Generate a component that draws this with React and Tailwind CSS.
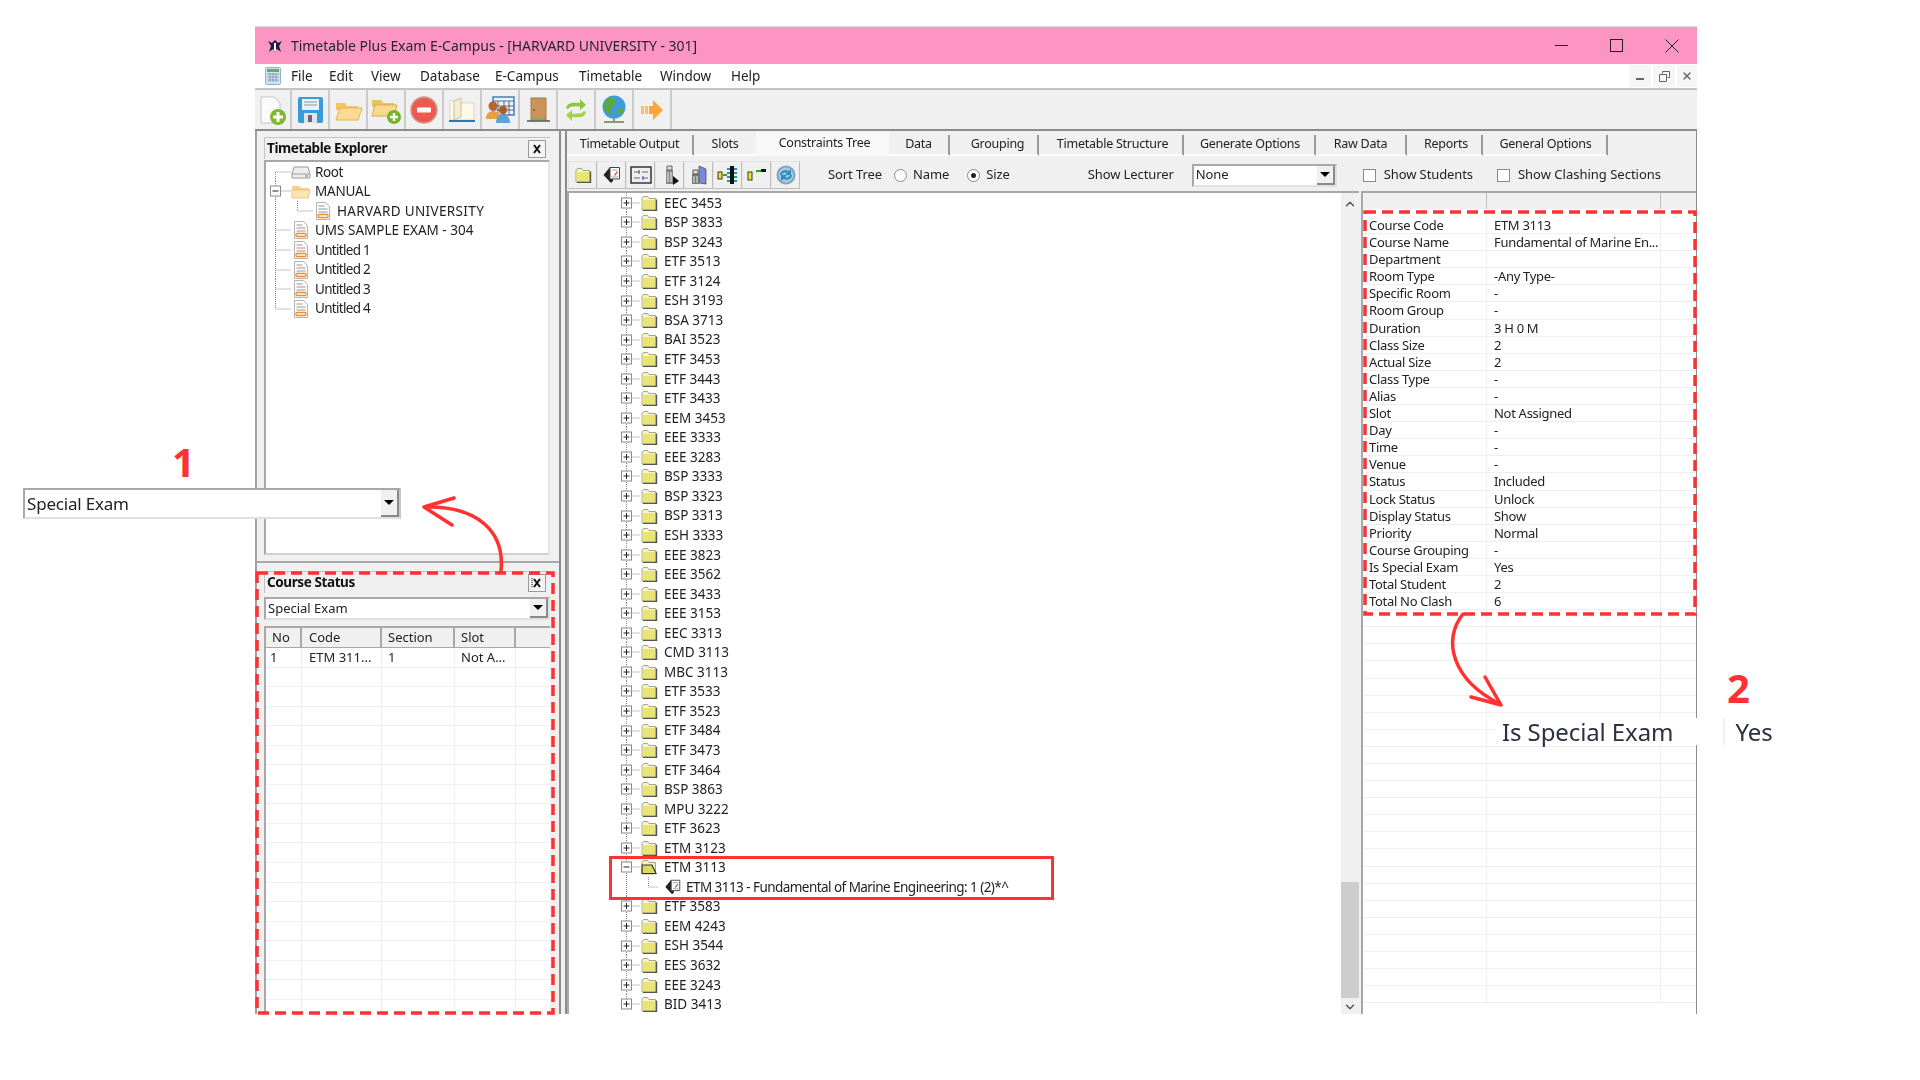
import React from "react";
import { X, ChevronUp, ChevronDown } from "lucide-react";

const menus = [
  ["File", "w-[38px]"],
  ["Edit", "w-[42px]"],
  ["View", "w-[49px]"],
  ["Database", "w-[75px]"],
  ["E-Campus", "w-[84px]"],
  ["Timetable", "w-[81px]"],
  ["Window", "w-[71px]"],
  ["Help", "w-[40px]"],
];

const tabs = [
  ["Timetable Output", "w-[127px]"],
  ["Slots", "w-[62px]"],
  ["Constraints Tree", "w-[133px] pl-[4px]"],
  ["Data", "w-[61px]"],
  ["Grouping", "w-[89px] pl-[8px]"],
  ["Timetable Structure", "w-[145px] pl-[4px]"],
  ["Generate Options", "w-[132px] pl-[2px]"],
  ["Raw Data", "w-[91px]"],
  ["Reports", "w-[76px] pl-[4px]"],
  ["General Options", "w-[125px] pl-[2px]"],
];

const coursesTop = [
  "EEC 3453", "BSP 3833", "BSP 3243", "ETF 3513", "ETF 3124", "ESH 3193", "BSA 3713",
  "BAI 3523", "ETF 3453", "ETF 3443", "ETF 3433", "EEM 3453", "EEE 3333", "EEE 3283",
  "BSP 3333", "BSP 3323", "BSP 3313", "ESH 3333", "EEE 3823", "EEE 3562", "EEE 3433",
  "EEE 3153", "EEC 3313", "CMD 3113", "MBC 3113", "ETF 3533", "ETF 3523", "ETF 3484",
  "ETF 3473", "ETF 3464", "BSP 3863", "MPU 3222", "ETF 3623", "ETM 3123",
];
const coursesBottom = ["ETF 3583", "EEM 4243", "ESH 3544", "EES 3632", "EEE 3243", "BID 3413"];

const props = [
  ["Course Code", "ETM 3113"],
  ["Course Name", "Fundamental of Marine En..."],
  ["Department", ""],
  ["Room Type", "-Any Type-"],
  ["Specific Room", "-"],
  ["Room Group", "-"],
  ["Duration", "3 H 0 M"],
  ["Class Size", "2"],
  ["Actual Size", "2"],
  ["Class Type", "-"],
  ["Alias", "-"],
  ["Slot", "Not Assigned"],
  ["Day", "-"],
  ["Time", "-"],
  ["Venue", "-"],
  ["Status", "Included"],
  ["Lock Status", "Unlock"],
  ["Display Status", "Show"],
  ["Priority", "Normal"],
  ["Course Grouping", "-"],
  ["Is Special Exam", "Yes"],
  ["Total Student", "2"],
  ["Total No Clash", "6"],
];

// tree gutter: dotted connector plus optional +/- box
function Gutter({ box, last, first, width = 22 }) {
  return (
    <svg width={width} height="20" viewBox={`0 0 ${width} 20`} className="shrink-0">
      <path
        d={`M8.5 ${first ? 10 : 0}V${last ? 10 : 20}M8.5 10H${width}`}
        stroke="#888"
        strokeDasharray="1 1"
        fill="none"
      />
      {box && (
        <>
          <rect x="3.5" y="5" width="10" height="10" fill="#fff" stroke="#8a8a8a" />
          <path d={box === "plus" ? "M5.5 10h6M8.5 7v6" : "M5.5 10h6"} stroke="#222" />
        </>
      )}
    </svg>
  );
}

function Folder({ open }) {
  return (
    <svg width="18" height="16" viewBox="0 0 18 16" className="shrink-0">
      <path d="M2 3.5 3.5 1.5h4L9 3.5h6.5V15H2z" fill="#f6f4d0" stroke="#8f8f70" strokeWidth=".8" />
      {open ? (
        <path d="M2 6h10l4 8.5H2z" fill="#dcd95e" stroke="#333" strokeWidth="1.2" />
      ) : (
        <>
          <rect x="2.5" y="5" width="13" height="9.5" fill="#e8e576" />
          <path d="M16.5 4.5V15.5H3" stroke="#555" strokeWidth="1.4" fill="none" />
        </>
      )}
    </svg>
  );
}

function TagDoc({ size = 20 }) {
  return (
    <svg width={size} height={size} viewBox="0 0 20 20" className="shrink-0">
      <path d="M8 2 1.5 10 9 18l2-2V6z" fill="#222" />
      <path d="M8 2.5h9.5V14H8z" fill="#fff" stroke="#444" />
      <path d="M10 5h5M10 12h6" stroke="#8aa" />
      <path d="m12 10 3-4 1 1-3 4z" fill="#d9553a" />
    </svg>
  );
}

function DocIcon() {
  return (
    <svg width="16" height="20" viewBox="0 0 16 20" className="shrink-0">
      <path d="M1.5 1.5h9l4 4v13h-13z" fill="#fdfbf6" stroke="#b4b4b4" />
      <path d="M3.5 5h6M3.5 8h9M3.5 11h9" stroke="#999" />
      <rect x="3" y="13.5" width="10" height="3" rx="1" fill="#fff" stroke="#ef8a30" strokeWidth="1.3" />
    </svg>
  );
}

function ExplorerRow({ depth, box, first, last, icon, label, labelClass = "" }) {
  return (
    <div className="flex items-center h-[19.55px] text-[13.5px] text-[#222] whitespace-nowrap">
      {depth === 1 ? (
        <svg width="46" height="20" viewBox="0 0 46 20" className="shrink-0">
          <path d="M8.5 0V20M30.5 0V10H46" stroke="#888" strokeDasharray="1 1" fill="none" />
        </svg>
      ) : (
        <Gutter box={box} first={first} last={last} width={24} />
      )}
      <span className="w-[20px] flex justify-center shrink-0">{icon}</span>
      <span className={`ml-[4px] ${labelClass}`}>{label}</span>
    </div>
  );
}

function ToolBtn({ children }) {
  return (
    <div className="w-[38px] h-full flex items-center justify-center border-r-2 border-[#c9c9c9] shrink-0">
      {children}
    </div>
  );
}

function SubBtn({ children }) {
  return (
    <div className="w-[29px] h-[28px] flex items-center justify-center border border-[#e4e4e4] border-r-[#bdbdbd] border-b-[#bdbdbd] shrink-0">
      {children}
    </div>
  );
}

function Combo({ text, className, textClass = "text-[13.5px]" }) {
  return (
    <div className={`flex items-center bg-white border-2 border-[#a8a8a8] border-r-[#e0e0e0] border-b-[#e0e0e0] ${className}`}>
      <span className={`flex-1 pl-[2px] text-[#222] ${textClass}`}>{text}</span>
      <span className="w-[18px] h-full flex items-center justify-center bg-[#f0f0f0] border-r-2 border-b-2 border-[#8a8a8a]">
        <span className="w-0 h-0 border-x-[5px] border-x-transparent border-t-[5px] border-t-black" />
      </span>
    </div>
  );
}

function PanelHeader({ title, pinned }) {
  return (
    <div className="h-[22px] flex items-center justify-between border-t border-l border-[#c4c4c4] pl-[2px] pr-[4px]">
      <span className="font-bold text-[13.5px] tracking-[-0.4px] text-[#111]">{title}</span>
      <span className="w-[18px] h-[18px] flex items-center justify-center border border-[#9a9a9a] bg-[#f4f4f4]">
        <svg width="12" height="12" viewBox="0 0 12 12" fill="none" stroke="#111">
          <path d="M3 2 9 10M9 2 3 10" strokeWidth="2" />
          {pinned && <path d="M1 1v10" strokeDasharray="1 1" />}
        </svg>
      </span>
    </div>
  );
}

function Annotations() {
  return (
    <svg className="absolute inset-0 pointer-events-none" width="1920" height="1080" viewBox="0 0 1920 1080" fill="none">
      <rect x="257" y="573" width="296" height="440" stroke="#ff3131" strokeWidth="3.5" strokeDasharray="11 6" />
      <rect x="1365" y="212" width="330" height="402" stroke="#ff3131" strokeWidth="3.5" strokeDasharray="11 6" />
      <path d="M501 571C505 532 478 506 426 507" stroke="#ff3131" strokeWidth="3.5" strokeLinecap="round" />
      <path d="M454 498 424 507 452 525" stroke="#ff3131" strokeWidth="3.5" strokeLinecap="round" strokeLinejoin="round" />
      <path d="M1463 614C1442 640 1452 680 1500 704" stroke="#ff3131" strokeWidth="3.5" strokeLinecap="round" />
      <path d="M1471 697 1501 705 1485 677" stroke="#ff3131" strokeWidth="3.5" strokeLinecap="round" strokeLinejoin="round" />
    </svg>
  );
}

export default function App() {
  return (
    <div className="relative w-[1920px] h-[1080px] bg-white overflow-hidden pt-[26px] pl-[255px] font-['Noto_Sans',sans-serif]">
      <div className="w-[1442px] h-[988px] flex flex-col border-t border-[#dcdcdc] overflow-hidden blur-[0.35px]">
        {/* title bar */}
        <div className="h-[37px] shrink-0 bg-[#fc95c1] flex items-center pl-[12px] text-[14px] tracking-[-0.05px] text-[#2a2230]">
          <svg width="16" height="16" viewBox="0 0 16 16" className="mr-[8px]">
            <path d="M1 3l4 2 3-3 3 3 4-2-3 5 2 6-4-3-2 3-2-3-4 3 2-6z" fill="#1e1a4a" />
            <path d="M7 5h2v8H7z" fill="#fff" />
          </svg>
          <span>Timetable Plus Exam E-Campus - [HARVARD UNIVERSITY - 301]</span>
          <div className="ml-auto flex items-center h-full -mr-[2px]">
            <span className="w-[55px] flex justify-center">
              <svg width="13" height="13" viewBox="0 0 13 13" stroke="#222" fill="none"><path d="M0 6.5h13" /></svg>
            </span>
            <span className="w-[55px] flex justify-center">
              <svg width="13" height="13" viewBox="0 0 13 13" stroke="#222" fill="none"><rect x=".5" y=".5" width="12" height="12" /></svg>
            </span>
            <span className="w-[55px] flex justify-center">
              <svg width="14" height="14" viewBox="0 0 14 14" stroke="#222" fill="none"><path d="M.5.5l13 13M13.5.5l-13 13" /></svg>
            </span>
          </div>
        </div>

        {/* menu bar */}
        <div className="h-[26px] shrink-0 bg-white border-b-2 border-[#c4c4c4] flex items-center pl-[10px] text-[13.5px] text-[#222]">
          <svg width="16" height="18" viewBox="0 0 16 18" className="mr-[10px]">
            <rect x=".5" y=".5" width="15" height="17" rx="1" fill="#cfe3f2" stroke="#8fb2cc" />
            <rect x="2" y="2" width="12" height="3" fill="#68a868" />
            <path d="M2 7h12M2 10h12M2 13h12M5 6v9M8 6v9M11 6v9" stroke="#7d95a8" strokeWidth=".8" />
          </svg>
          {menus.map(([m, w]) => (
            <span key={m} className={w}>{m}</span>
          ))}
          <div className="ml-auto flex items-center gap-[2px] text-[#666]">
            <span className="w-[22px] h-[22px] flex items-center justify-center bg-[#f6f6f6]"><span className="w-[8px] h-[2px] mt-[6px] bg-[#666]" /></span>
            <span className="w-[22px] h-[22px] flex items-center justify-center bg-[#f6f6f6]">
              <svg width="11" height="11" viewBox="0 0 11 11" fill="none" stroke="#666"><path d="M3.5 2.5V.5h7v6h-2M.5 3.5h7v7h-7z" /></svg>
            </span>
            <span className="w-[20px] h-[22px] flex items-center justify-center bg-[#f6f6f6]"><X size={12} strokeWidth={3} /></span>
          </div>
        </div>

        {/* main toolbar */}
        <div className="h-[39px] shrink-0 bg-[#f0f0f0] flex items-stretch -ml-[1px]">
          <ToolBtn>
            <svg width="32" height="32" viewBox="0 0 32 32"><path d="M5 3h13l6 6v20H5z" fill="#fafafa" stroke="#c4c4c4" /><circle cx="22" cy="23" r="8" fill="#7fb82a" /><path d="M22 18v10M17 23h10" stroke="#fff" strokeWidth="3" /></svg>
          </ToolBtn>
          <ToolBtn>
            <svg width="30" height="30" viewBox="0 0 30 30"><rect x="3" y="2" width="25" height="26" rx="2" fill="#3b9bd8" /><rect x="7" y="4" width="17" height="11" fill="#eef2f4" /><path d="M9 7h13M9 10h13" stroke="#8898a4" /><rect x="9" y="18" width="13" height="10" fill="#dce4ea" /><rect x="13" y="20" width="4" height="7" fill="#667" /></svg>
          </ToolBtn>
          <ToolBtn>
            <svg width="30" height="30" viewBox="0 0 30 30"><path d="M3 8h9l2 3h11v4H3z" fill="#f6c35d" /><path d="M3 25 7 13h22l-4 12z" fill="#fcdc95" stroke="#e8b34c" /></svg>
          </ToolBtn>
          <ToolBtn>
            <svg width="32" height="32" viewBox="0 0 32 32"><path d="M2 6h9l2 3h11v4H2z" fill="#e9c265" /><path d="M2 22 5 11h22l-3 11z" fill="#f8da8c" stroke="#d9ab47" /><circle cx="24" cy="23" r="7" fill="#74b32a" /><path d="M24 19v8M20 23h8" stroke="#fff" strokeWidth="2.4" /></svg>
          </ToolBtn>
          <ToolBtn>
            <svg width="30" height="30" viewBox="0 0 30 30"><circle cx="15" cy="15" r="13" fill="#ef5a50" stroke="#c9a090" strokeWidth="1.5" /><rect x="8" y="12.5" width="14" height="5" rx="1" fill="#fff" /></svg>
          </ToolBtn>
          <ToolBtn>
            <svg width="32" height="30" viewBox="0 0 32 30"><path d="M4 5v20h24V8H16z" fill="#fdf8ea" stroke="#ddd4b8" /><path d="M15 3 8 6v19l7-3z" fill="#f4edd2" stroke="#c8c0a4" /><path d="M3 26h26" stroke="#2f76b5" strokeWidth="2" /></svg>
          </ToolBtn>
          <ToolBtn>
            <svg width="32" height="30" viewBox="0 0 32 30"><rect x="9" y="2" width="21" height="18" fill="#eef3f8" stroke="#3f7fc4" strokeWidth="1.5" /><path d="M9 6h21M14 6v14M20 6v14M25 6v14M9 11h21M9 15h21" stroke="#445" strokeWidth=".8" /><circle cx="9" cy="11" r="4.5" fill="#b4662c" /><path d="M2 24c0-6 4-8 7-8s7 2 7 8z" fill="#e8a13a" /><circle cx="19" cy="15" r="4" fill="#a65e2c" /><path d="M12 28c0-6 3-8 7-8s7 2 7 8z" fill="#5ea0dc" /></svg>
          </ToolBtn>
          <ToolBtn>
            <svg width="30" height="30" viewBox="0 0 30 30"><rect x="8" y="3" width="15" height="22" fill="#c9935a" stroke="#a87a48" /><circle cx="11" cy="15" r="1" fill="#654" /><rect x="9" y="23" width="13" height="2" fill="#8aa858" /><path d="M4 26h23" stroke="#555" strokeWidth="1.5" /></svg>
          </ToolBtn>
          <ToolBtn>
            <svg width="26" height="26" viewBox="0 0 26 26" fill="none"><path d="M3 11C4 6 9 5 17 6V2l6 6-6 5V9.5C11 9 7 9 5 12z" fill="#8cc63f" /><path d="M23 15c-1 5-6 6-14 5v4l-6-6 6-5v3.5c6 .5 10 .5 12-2.500z" fill="#a6d14a" /></svg>
          </ToolBtn>
          <ToolBtn>
            <svg width="30" height="32" viewBox="0 0 30 32"><circle cx="15" cy="13" r="11.5" fill="#3f9ae0" /><path d="M11 3c4 1 7 3 6 6s-4 2-5 5 2 5 1 7c-4-1-8-5-8-9s3-8 6-9zM19 14c3 0 5 1 5 2s-2 5-4 5-2-5-1-7z" fill="#5ba83c" /><path d="M15 24v3M5 28h20" stroke="#8a9a70" strokeWidth="2" /></svg>
          </ToolBtn>
          <ToolBtn>
            <svg width="26" height="26" viewBox="0 0 26 26"><path d="M2 9h3v8H2zM6 9h3v8H6z" fill="#fbc45a" /><path d="M10 9h4V3l10 10-10 10v-6h-4z" fill="#f9a63a" /></svg>
          </ToolBtn>
        </div>

        {/* main area */}
        <div className="flex-1 min-h-0 flex bg-[#f0f0f0] border-t-2 border-[#8c8c8c]">
          {/* left column */}
          <div className="w-[306px] shrink-0 flex flex-col border-l-2 border-[#a0a0a0] border-r-2 border-r-[#8c8c8c]">
            <div className="h-[432px] shrink-0 pt-[6px] pl-[7px] pr-[9px] pb-[6px] flex flex-col border-b-2 border-[#a8a8a8]">
              <PanelHeader title="Timetable Explorer" />
              <div className="flex-1 mt-[1px] bg-white border-2 border-[#a8a8a8] border-r-[#e4e4e4] border-b-[#d0d0d0] pl-[1px]">
                <ExplorerRow first labelClass="tracking-[-0.4px]" icon={
                  <svg width="20" height="16" viewBox="0 0 20 16"><path d="M3 3h14l2 7v4H1v-4z" fill="#eceff2" stroke="#9a9a9a" /><path d="M1 10h18" stroke="#9a9a9a" /><rect x="14" y="11.5" width="3" height="1" fill="#777" /></svg>
                } label="Root" />
                <ExplorerRow box="minus" labelClass="tracking-[-0.2px]" icon={
                  <svg width="20" height="17" viewBox="0 0 20 17"><path d="M1 3h7l2 2h8v10H1z" fill="#f7cf8b" /><path d="M1 7h18l-2 8H1z" fill="#fde4b4" stroke="#e4bd7c" strokeWidth=".8" /></svg>
                } label="MANUAL" />
                <ExplorerRow depth={1} labelClass="tracking-[0.35px]" icon={<DocIcon />} label="HARVARD UNIVERSITY" />
                <ExplorerRow icon={<DocIcon />} label="UMS SAMPLE EXAM - 304" />
                <ExplorerRow labelClass="tracking-[-0.7px]" icon={<DocIcon />} label="Untitled 1" />
                <ExplorerRow labelClass="tracking-[-0.7px]" icon={<DocIcon />} label="Untitled 2" />
                <ExplorerRow labelClass="tracking-[-0.7px]" icon={<DocIcon />} label="Untitled 3" />
                <ExplorerRow last labelClass="tracking-[-0.7px]" icon={<DocIcon />} label="Untitled 4" />
              </div>
            </div>

            <div className="flex-1 min-h-0 pl-[7px] pr-[9px] pt-[8px] flex flex-col">
              <PanelHeader title="Course Status" pinned />
              <Combo text="Special Exam" className="h-[23px] mt-[4px]" textClass="text-[13px]" />
              <div className="flex-1 min-h-0 mt-[6px] bg-white border-t-2 border-l-2 border-[#a8a8a8] text-[13px] text-[#222] overflow-hidden">
                <div className="flex h-[20px] bg-[#f0f0f0] border-b border-[#a8a8a8]">
                  <span className="w-[36px] pl-[6px] border-r-2 border-[#a8a8a8]">No</span>
                  <span className="w-[80px] pl-[7px] border-r-2 border-[#a8a8a8]">Code</span>
                  <span className="w-[73px] pl-[6px] border-r-2 border-[#a8a8a8]">Section</span>
                  <span className="w-[61px] pl-[6px] border-r-2 border-[#a8a8a8]">Slot</span>
                </div>
                {Array.from({ length: 20 }).map((_, i) => (
                  <div key={i} className="flex h-[19.55px] leading-[19px] border-b border-[#efefef]">
                    <span className="w-[36px] pl-[4px] border-r border-[#efefef]">{i === 0 && "1"}</span>
                    <span className="w-[80px] pl-[7px] border-r border-[#efefef]">{i === 0 && "ETM 311..."}</span>
                    <span className="w-[73px] pl-[6px] border-r border-[#efefef]">{i === 0 && "1"}</span>
                    <span className="w-[61px] pl-[6px] border-r border-[#efefef]">{i === 0 && "Not A..."}</span>
                  </div>
                ))}
              </div>
            </div>
          </div>

          {/* right column */}
          <div className="flex-1 min-w-0 flex flex-col ml-[4px] border-l-2 border-[#8c8c8c] border-r border-r-[#8c8c8c]">
            <div className="h-[24px] shrink-0 mt-[1px] pt-[3px] flex items-stretch text-[12.5px] tracking-[-0.25px] text-[#222]">
              {tabs.map(([t, w]) => (
                <span
                  key={t}
                  className={`${w} flex items-center justify-center shrink-0 ${
                    t === "Constraints Tree" ? "bg-[#f8f8f8] -mt-[3px] pb-[2px]" : t === "Slots" ? "border-b-2 border-white" : "border-r-2 border-[#9a9a9a] border-b-2 border-b-white"
                  }`}
                >
                  {t}
                </span>
              ))}
            </div>

            {/* constraints toolbar */}
            <div className="h-[28px] shrink-0 mt-[5px] flex items-center pl-[1px] text-[13px] tracking-[-0.1px] text-[#222] whitespace-nowrap">
              <div className="flex">
                <SubBtn><Folder /></SubBtn>
                <SubBtn><TagDoc /></SubBtn>
                <SubBtn>
                  <svg width="22" height="18" viewBox="0 0 22 18" fill="none"><rect x="1" y="1" width="20" height="16" stroke="#333" strokeWidth="1.5" fill="#eee" /><path d="M4 6h6M12 6h6M4 12h6M12 12h6" stroke="#667" /><path d="M9 4v4M13 10v4" stroke="#35a" /></svg>
                </SubBtn>
                <SubBtn>
                  <svg width="20" height="22" viewBox="0 0 20 22"><path d="M6 6h7v14H6z" fill="#888" /><path d="M7 2h5v4H7z" fill="#ddd" stroke="#666" /><path d="M8 8v10M11 8v10" stroke="#eee" /><path d="M13 12l6 5-6 4z" fill="#111" /></svg>
                </SubBtn>
                <SubBtn>
                  <svg width="22" height="22" viewBox="0 0 22 22"><path d="M11 2l7 3v15l-7-1z" fill="#7a88d8" stroke="#445" strokeWidth=".7" /><path d="M4 10h7v10H4z" fill="#777" /><path d="M5 6h5v4H5z" fill="#ddd" stroke="#555" /><path d="M6 12v7M9 12v7" stroke="#eee" /></svg>
                </SubBtn>
                <SubBtn>
                  <svg width="22" height="22" viewBox="0 0 22 22"><rect x="1" y="8" width="4" height="7" fill="#f0e628" stroke="#333" /><path d="M6 11h4" stroke="#2a2" strokeWidth="2" /><rect x="13" y="2" width="4" height="18" fill="#111" /><path d="M10 5h3M10 9h3M10 13h3M10 17h3M17 5h3M17 9h3M17 13h3M17 17h3" stroke="#1aa090" strokeWidth="2" /></svg>
                </SubBtn>
                <SubBtn>
                  <svg width="22" height="22" viewBox="0 0 22 22"><rect x="2" y="8" width="4" height="8" fill="#f0e628" stroke="#333" /><path d="M10 7h5" stroke="#2a2" strokeWidth="2" /><rect x="15" y="5" width="5" height="3" fill="#111" /></svg>
                </SubBtn>
                <SubBtn>
                  <svg width="22" height="22" viewBox="0 0 22 22" fill="none"><circle cx="11" cy="11" r="8.5" fill="#a6cbe0" stroke="#7da5bc" strokeWidth="2" /><path d="M5 11c0-4 5-6 9-4l2-2v6h-6l2-2c-2-1-5 0-5 2zM17 11c0 4-5 6-9 4l-2 2v-6h6l-2 2c2 1 5 0 5-2z" fill="#2f8fbf" /></svg>
                </SubBtn>
              </div>
              <span className="ml-[28px]">Sort Tree</span>
              <span className="ml-[12px] w-[13px] h-[13px] rounded-full border border-[#8a8a8a] bg-white" />
              <span className="ml-[6px]">Name</span>
              <span className="ml-[18px] w-[13px] h-[13px] rounded-full border border-[#8a8a8a] bg-white flex items-center justify-center">
                <span className="w-[5px] h-[5px] rounded-full bg-[#222]" />
              </span>
              <span className="ml-[6px]">Size</span>
              <span className="ml-[78px]">Show Lecturer</span>
              <Combo text="None" className="ml-[18px] w-[145px] h-[23px]" textClass="text-[13px] pl-[2px]" />
              <span className="ml-[26px] w-[13px] h-[13px] border border-[#8a8a8a] bg-white" />
              <span className="ml-[8px]">Show Students</span>
              <span className="ml-[24px] w-[13px] h-[13px] border border-[#8a8a8a] bg-white" />
              <span className="ml-[8px] tracking-[0px]">Show Clashing Sections</span>
            </div>

            <div className="flex-1 min-h-0 mt-[2px] flex">
              {/* course tree */}
              <div className="w-[792px] shrink-0 relative flex bg-white border-t-2 border-l-2 border-[#a8a8a8] overflow-hidden">
                <div className="flex-1 min-w-0 pl-[49px] text-[13.5px] text-[#222] whitespace-nowrap">
                  {coursesTop.map((c) => (
                    <div key={c} className="flex items-center h-[19.55px]">
                      <Gutter box="plus" />
                      <Folder />
                      <span className="ml-[6px]">{c}</span>
                    </div>
                  ))}
                  <div className="flex items-center h-[19.55px]">
                    <Gutter box="minus" />
                    <Folder open />
                    <span className="ml-[6px]">ETM 3113</span>
                  </div>
                  <div className="flex items-center h-[19.55px]">
                    <svg width="46" height="20" viewBox="0 0 46 20" className="shrink-0">
                      <path d="M8.5 0V20M30.5 0V10H40" stroke="#888" strokeDasharray="1 1" fill="none" />
                    </svg>
                    <TagDoc size={18} />
                    <span className="ml-[4px] tracking-[-0.55px]">ETM 3113 - Fundamental of Marine Engineering: 1 (2)*^</span>
                  </div>
                  {coursesBottom.map((c, i) => (
                    <div key={c} className="flex items-center h-[19.55px]">
                      <Gutter box="plus" last={i === coursesBottom.length - 1} />
                      <Folder />
                      <span className="ml-[6px]">{c}</span>
                    </div>
                  ))}
                </div>
                <div className="w-[18px] shrink-0 bg-[#f0f0f0] flex flex-col items-center justify-between text-[#555]">
                  <ChevronUp size={14} strokeWidth={2.5} className="mt-[4px]" />
                  <ChevronDown size={14} strokeWidth={2.5} />
                </div>
                <div className="absolute right-0 top-[689px] w-[18px] h-[116px] bg-[#cdcdcd]" />
              </div>

              {/* properties grid */}
              <div className="ml-[2px] flex-1 min-w-0 bg-white border-t-2 border-l-2 border-[#a8a8a8] text-[13px] tracking-[-0.3px] text-[#222] whitespace-nowrap overflow-hidden">
                <div className="flex h-[16px] bg-[#f0f0f0]">
                  <span className="w-[124px] border-r border-[#c0c0c0]" />
                  <span className="w-[174px] border-r border-[#c0c0c0]" />
                </div>
                <div className="h-[8px]" />
                {Array.from({ length: 46 }).map((_, i) => (
                  <div key={i} className="flex h-[17.1px] leading-[16px] border-b border-[#efefef]">
                    <span className="w-[124px] pl-[6px] border-r border-[#efefef]">{props[i] && props[i][0]}</span>
                    <span className="w-[174px] pl-[7px] border-r border-[#efefef]">{props[i] && props[i][1]}</span>
                  </div>
                ))}
              </div>
            </div>
          </div>
        </div>
      </div>

      {/* annotation: solid box round the expanded node */}
      <div className="absolute left-[609px] top-[856px] w-[445px] h-[44px] border-[3.5px] border-[#ff3131]" />

      <Annotations />

      {/* callout 1 */}
      <span className="absolute left-[172px] top-[435px] text-[40px] leading-[54px] font-bold text-[#ff3131] font-['Open_Sans',sans-serif]">1</span>
      <Combo text="Special Exam" className="absolute left-[23px] top-[488px] w-[378px] h-[31px] !border-r-[#c8c8c8] blur-[0.4px]" textClass="text-[17px] tracking-[-0.2px]" />

      {/* callout 2 */}
      <span className="absolute left-[1727px] top-[661px] text-[40px] leading-[54px] font-bold text-[#ff3131] font-['Open_Sans',sans-serif]">2</span>
      <div className="absolute left-[1496px] top-[718px] w-[285px] h-[27px] bg-white flex items-center text-[24px] text-[#2c3040] blur-[0.5px]">
        <span className="ml-[6px] -tracking-[0.1px]">Is Special Exam</span>
        <span className="ml-[62px]">Yes</span>
        <span className="absolute left-[227px] top-0 h-full w-[2px] bg-[#f0f0f0]" />
      </div>
    </div>
  );
}
